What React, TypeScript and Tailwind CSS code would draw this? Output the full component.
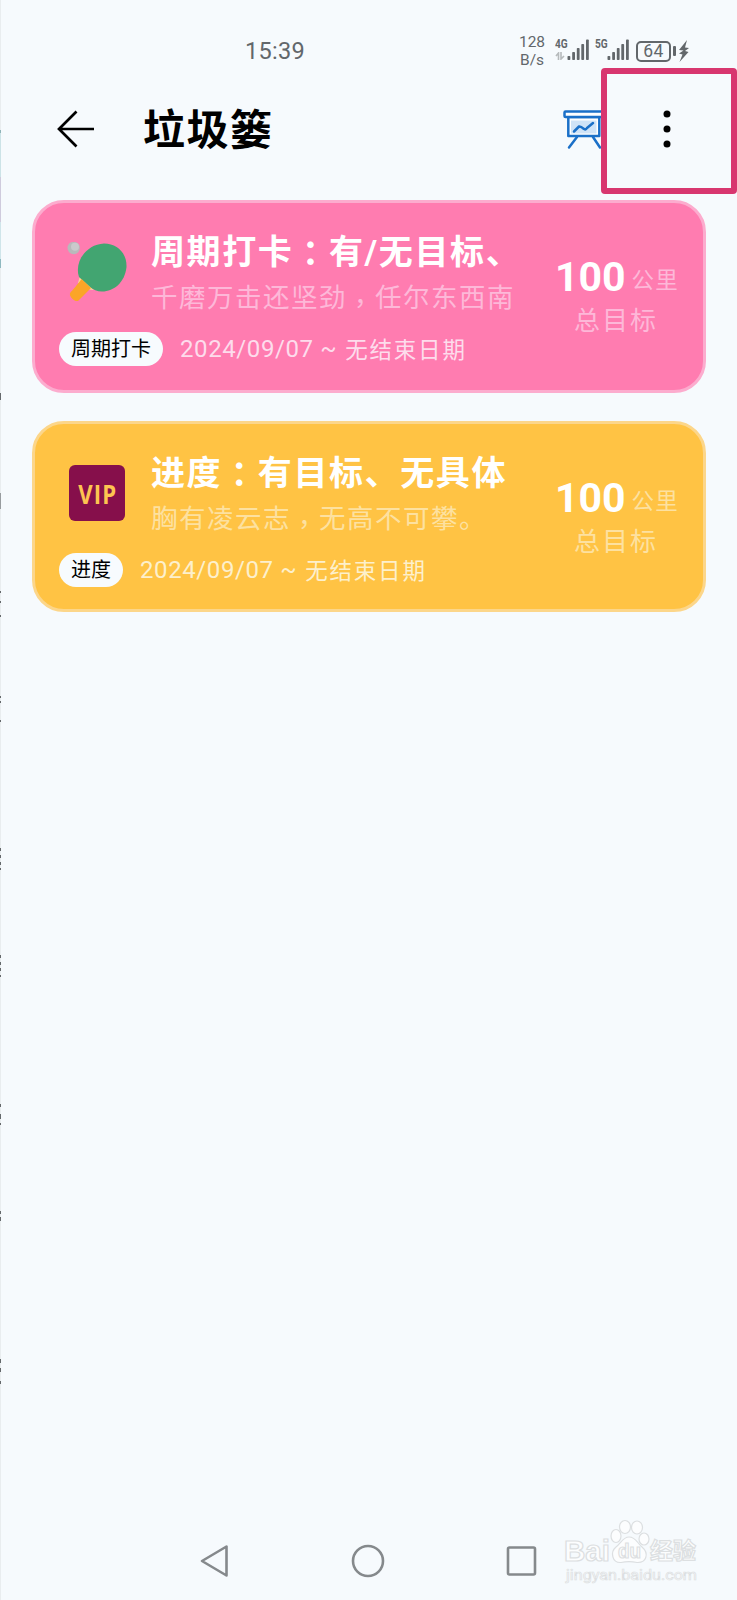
import type { ReactNode } from 'react'

interface Goal {
  title: string
  motto: string
  tag: string
  icon: ReactNode
  card: string
  mottoColor: string
  dateColor: string
}

function PaddleIcon() {
  return (
    <svg className="h-[60px] w-[60px]" viewBox="0 0 60 60">
      <circle cx="6.7" cy="6" r="6.2" fill="#b9b9bb" />
      <circle cx="8" cy="4.8" r="4" fill="#cacacc" />
      <path d="M13 34 L27 48 L17 47 L11 41 Z" fill="#fbd49a" />
      <path
        d="M12 35 C7 20 19 2.500 37 1.500 C51 1.500 60 12 59.500 25 C58 40 47 49.500 35 49.500 C30 49.500 26 47.500 23 45 Z"
        fill="#42a571"
      />
      <path d="M14.500 37 L24 46 L11.500 58.500 C9 61 2 55 3 51.500 C3.400 50 8 46 14.500 37 Z" fill="#fba527" />
    </svg>
  )
}

function VipIcon() {
  return (
    <div className="mt-[2px] flex h-14 w-14 items-center justify-center rounded-md bg-[#860f4b] font-['Open_Sans'] text-[27px] leading-none font-bold tracking-[1.500px] text-[#fdc451]">
      <span className="scale-x-[0.82] pl-[2px]">VIP</span>
    </div>
  )
}

const goals: Goal[] = [
  {
    title: '周期打卡：有/无目标、',
    motto: '千磨万击还坚劲，任尔东西南',
    tag: '周期打卡',
    icon: <PaddleIcon />,
    card: 'h-[193px] border-[#fcacce] bg-[#ff7cb0]',
    mottoColor: 'text-[#fdb8d8]',
    dateColor: 'text-[#fddcec]',
  },
  {
    title: '进度：有目标、无具体',
    motto: '胸有凌云志，无高不可攀。',
    tag: '进度',
    icon: <VipIcon />,
    card: 'h-[191px] border-[#fcd68a] bg-[#ffc344]',
    mottoColor: 'text-[#fde1a0]',
    dateColor: 'text-[#fdf0cc]',
  },
]

// The colon and the comma sit in the middle of their cell, as in the TC glyphs
function CenteredPunctuation({ text }: { text: string }) {
  return text.split(/([：，])/).map((part, i) => {
    if (part === '：') {
      return (
        <span key={i} className="relative top-[2px] font-['Noto_Sans_CJK_TC'] leading-none">
          {part}
        </span>
      )
    }
    if (part === '，') {
      return (
        <span key={i} className="relative top-[6px] font-['Noto_Sans_CJK_TC'] leading-none">
          {part}
        </span>
      )
    }
    return <span key={i}>{part}</span>
  })
}

function GoalCard({ goal }: { goal: Goal }) {
  return (
    <div className={`flex rounded-[32px] border-[3px] pt-[26px] whitespace-nowrap ${goal.card}`}>
      <div className="flex w-[507px] flex-col pl-[24px]">
        <div className="flex">
          <div className="flex w-[92px] justify-center pt-[13px] pr-[17px]">{goal.icon}</div>
          <div>
            <h2 className="h-[46px] text-[34px] leading-[46px] font-bold tracking-[1.600px] text-white">
              <CenteredPunctuation text={goal.title} />
            </h2>
            <p className={`h-[46px] text-[26.500px] leading-[46px] tracking-[1.500px] ${goal.mottoColor}`}>
              <CenteredPunctuation text={goal.motto} />
            </p>
          </div>
        </div>
        <div className="mt-[10px] flex items-center">
          <span className="flex h-[34px] items-center rounded-full bg-[#f7fbfe] px-[12px] text-[20px] text-black">
            {goal.tag}
          </span>
          <span className={`ml-[17px] flex items-center text-[24px] leading-[34px] ${goal.dateColor}`}>
            <span className="tracking-[0.600px]">2024/09/07 ~</span>
            <span className="ml-[8px] pt-[2px] text-[22.500px] tracking-[1.800px]">无结束日期</span>
          </span>
        </div>
      </div>
      <div className="ml-[13px] pt-[25px]">
        <div className="flex h-[46px] items-center">
          <span className="text-[41px] leading-[46px] font-bold text-white">100</span>
          <span className={`ml-[6px] pt-[7px] text-[22.500px] tracking-[1.200px] ${goal.mottoColor}`}>公里</span>
        </div>
        <div className={`pl-[19px] text-[26px] leading-[42px] tracking-[2px] ${goal.mottoColor}`}>总目标</div>
      </div>
    </div>
  )
}

function SignalBars() {
  return (
    <svg className="h-[22px] w-[23px]" viewBox="0 0 23 22" fill="#62676b">
      <rect x="0.500" y="17" width="2.800" height="4" rx="0.800" />
      <rect x="5.200" y="13" width="2.800" height="8" rx="0.800" />
      <rect x="9.800" y="9" width="2.800" height="12" rx="0.800" />
      <rect x="14.300" y="5" width="2.800" height="16" rx="0.800" />
      <rect x="19" y="0.500" width="2.800" height="20.500" rx="0.800" />
    </svg>
  )
}

function StatusBar() {
  return (
    <div className="flex h-[100px] items-start text-[#62676b]">
      <div className="mt-[36px] ml-[245px] w-[273px] text-[23.500px] leading-[30px] tracking-[0.300px]">15:39</div>
      <div className="mt-[33px] w-[28px] text-center text-[15.500px] leading-[18px]">
        <div>128</div>
        <div>B/s</div>
      </div>
      <div className="mt-[39px] ml-[9px] flex">
        <div className="flex w-[12px] flex-col">
          <span className="origin-left scale-x-[0.88] scale-y-110 text-[11.500px] leading-[11px] font-bold">4G</span>
          <svg className="mt-[2px] h-[8px] w-[10px]" viewBox="0 0 10 8" stroke="#b6babc" strokeWidth="1.600" fill="none">
            <path d="M3.500 8 V1 L1 4 M6 0 V7 L9 4" />
          </svg>
        </div>
        <SignalBars />
        <div className="ml-[5px] w-[12px] origin-left scale-x-[0.88] scale-y-110 text-[11.500px] leading-[11px] font-bold">
          5G
        </div>
        <SignalBars />
      </div>
      <div className="mt-[40px] ml-[6px] flex items-center">
        <div className="flex h-[21px] w-[35px] items-center justify-center rounded-[5px] border-2 border-[#62676b] pt-[2px] text-[17.500px] leading-none tracking-[0.500px]">
          64
        </div>
        <div className="ml-[2px] h-[10px] w-[3px] rounded-[1px] bg-[#62676b]" />
        <svg className="ml-[2px] h-[22px] w-[12px]" viewBox="0 0 12 22" fill="#62676b">
          <path d="M9 0 L1 10 L5.500 10.500 L1 13.500 L4.500 14.500 L1.500 22 L10.500 12 L7 11 L11 8 L7 7.500 Z" />
        </svg>
      </div>
    </div>
  )
}

function Header() {
  return (
    <header className="flex h-[60px] items-center">
      <svg className="ml-[56px] h-[40px] w-[40px]" viewBox="0 0 40 40" fill="none" stroke="#000" strokeWidth="2.700">
        <path d="M38 19 H3 M20.500 1.500 L3 19 L20.500 36.500" />
      </svg>
      <h1 className="ml-[47px] w-[420px] pt-[2px] text-[42px] leading-[60px] font-bold tracking-[1.500px] text-black">
        垃圾篓
      </h1>
      <svg
        className="h-[40px] w-[42px]"
        viewBox="0 0 42 40"
        fill="none"
        stroke="#1b70c8"
        strokeWidth="2.500"
        strokeLinecap="round"
        strokeLinejoin="round"
      >
        <rect x="5.300" y="7" width="31" height="19" fill="#fff" />
        <rect x="8" y="10.500" width="25.500" height="13" fill="#cfe3f7" stroke="none" />
        <rect x="1.500" y="1.500" width="39" height="5.500" rx="1" fill="#fff" />
        <path d="M11 21.500 L16 16.500 Q17.500 16 21 19 Q23 20 24 18 L30 13 M14 27 L6 37.500 M30 27 L37 37.500" />
      </svg>
      <svg className="ml-[52px] h-[44px] w-[20px]" viewBox="0 0 20 44" fill="#000">
        <circle cx="10" cy="6" r="3.500" />
        <circle cx="10" cy="21" r="3.500" />
        <circle cx="10" cy="36" r="3.500" />
      </svg>
    </header>
  )
}

function NavBar() {
  return (
    <nav className="flex h-[78px] items-center justify-between pr-[199px] pl-[198px]">
      <svg className="h-[36px] w-[32px]" viewBox="0 0 32 36" fill="none" stroke="#85898c" strokeWidth="2.600" strokeLinejoin="round">
        <path d="M4 18 L28.500 3.500 V32.500 Z" />
      </svg>
      <svg className="h-[36px] w-[36px]" viewBox="0 0 36 36" fill="none" stroke="#85898c" strokeWidth="2.600">
        <circle cx="19" cy="18" r="15" />
      </svg>
      <svg className="h-[34px] w-[34px]" viewBox="0 0 34 34" fill="none" stroke="#85898c" strokeWidth="2.600">
        <rect x="4" y="3.500" width="27" height="27" rx="1.500" />
      </svg>
    </nav>
  )
}

function Watermark() {
  return (
    <svg
      className="absolute top-[1515px] left-[560px] h-[75px] w-[150px] font-['Liberation_Sans','Noto_Sans_CJK_SC',sans-serif]"
      viewBox="0 0 150 75"
      fill="#fcfdfe"
      stroke="#dcdfe1"
      strokeWidth="1.200"
    >
      <text x="4" y="46" fontSize="29" fontWeight="700" textLength="46" lengthAdjust="spacingAndGlyphs">
        Bai
      </text>
      <ellipse cx="56" cy="21" rx="5" ry="6.500" />
      <ellipse cx="65" cy="12" rx="5.500" ry="6.500" />
      <ellipse cx="77" cy="12.500" rx="5.500" ry="6.500" />
      <ellipse cx="84" cy="24" rx="5" ry="6" />
      <path d="M69 22 C63 22 61 28 56 32 C50 37 52 48 61 47.500 C66 46.500 72 46.500 77 47.500 C87 48 89 38 82 32 C77 28 76 22 69 22 Z" />
      <text x="58" y="43" fontSize="20" fontWeight="700" textLength="23" lengthAdjust="spacingAndGlyphs">
        du
      </text>
      <text x="90" y="44" fontSize="23" fontWeight="700" textLength="46" lengthAdjust="spacingAndGlyphs">
        经验
      </text>
      <text
        x="6"
        y="64.500"
        className="font-['Roboto']"
        fontSize="15"
        strokeWidth="0.700"
        textLength="131"
        lengthAdjust="spacingAndGlyphs"
      >
        jingyan.baidu.com
      </text>
    </svg>
  )
}

// Sliver of the previous page still visible on the left: [top, height, colour]
const edgeMarks: [number, number, string][] = [
  [0, 1600, '#e9edef'],
  [130, 3, '#8fb4b8'],
  [133, 44, '#cce3e7'],
  [177, 45, '#cfcbdd'],
  [222, 37, '#cfe5ea'],
  [259, 9, '#8fb9c0'],
  [393, 7, '#65696c'],
  [493, 16, '#989c9f'],
  [591, 2, '#65696c'],
  [601, 2, '#65696c'],
  [615, 2, '#65696c'],
  [696, 2, '#65696c'],
  [701, 2, '#65696c'],
  [720, 2, '#65696c'],
  [848, 3, '#65696c'],
  [855, 3, '#65696c'],
  [862, 3, '#65696c'],
  [868, 2, '#65696c'],
  [955, 3, '#65696c'],
  [962, 3, '#65696c'],
  [968, 3, '#65696c'],
  [975, 2, '#65696c'],
  [1104, 3, '#65696c'],
  [1114, 5, '#65696c'],
  [1123, 2, '#65696c'],
  [1211, 3, '#65696c'],
  [1217, 4, '#65696c'],
  [1359, 4, '#65696c'],
  [1368, 4, '#65696c'],
  [1381, 3, '#65696c'],
]

export default function App() {
  return (
    <div className="relative flex h-[1600px] w-[737px] flex-col overflow-hidden bg-[#f6fafd] font-['Roboto','Noto_Sans_CJK_SC',sans-serif]">
      <StatusBar />
      <Header />
      <main className="mt-[40px] flex flex-1 flex-col gap-[28px] pr-[31px] pl-[32px]">
        {goals.map((goal) => (
          <GoalCard key={goal.tag} goal={goal} />
        ))}
      </main>
      <NavBar />
      <Watermark />
      <div className="absolute top-[68px] left-[601px] h-[126px] w-[136px] rounded-[4px] border-[6px] border-[#d8366f]" />
      {edgeMarks.map(([top, height, color]) => (
        <div key={top} className="absolute left-0 w-px" style={{ top, height, background: color }} />
      ))}
    </div>
  )
}
